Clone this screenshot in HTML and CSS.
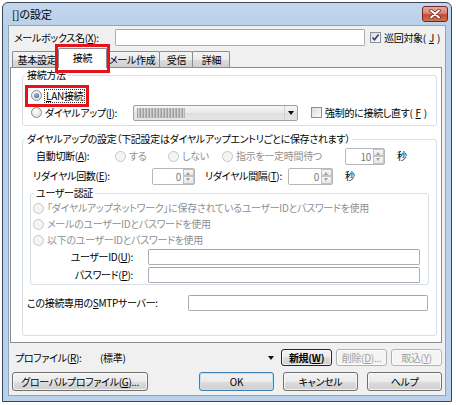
FILE: index.html
```html
<!DOCTYPE html>
<html lang="ja">

<head>
    <meta charset="UTF-8" />
    <title>[]の設定</title>
    <link rel="stylesheet" href="styles.css">
</head>

<body>

    <div class="window">
        <!-- タイトルバー -->
        <div class="titlebar">
            <span class="title">[]の設定</span>
            <span class="close">
                <svg width="12" height="10" viewBox="0 0 12 10">
                    <path d="M2 1.5 L10 8.5 M10 1.5 L2 8.5" stroke="#5a2018" stroke-width="3.4" stroke-linecap="round" />
                    <path d="M2 1.5 L10 8.5 M10 1.5 L2 8.5" stroke="#fff" stroke-width="2" stroke-linecap="round" />
                </svg>
            </span>
        </div>

        <div class="client">
            <!-- メールボックス名 -->
            <div class="row mailbox">
                <span class="lbl">メールボックス名(<u>X</u>):</span>
                <span class="edit"></span>
                <span class="check">
                    <span class="box">
                        <svg width="9" height="9" viewBox="0 0 9 9">
                            <path d="M1.5 4.5 L3.5 6.8 L7.6 1.6" fill="none" stroke="#2b3f84" stroke-width="1.6" />
                        </svg>
                    </span>
                    巡回対象(<u>J</u>)
                </span>
            </div>

            <!-- タブ -->
            <div class="tabs">
                <div class="tab t1">基本設定</div>
                <div class="tab active">接続<span class="mark"></span></div>
                <div class="tab t3">メール作成</div>
                <div class="tab t4">受信</div>
                <div class="tab t5">詳細</div>
            </div>

            <div class="panel">
                <fieldset class="group g-method">
                    <legend>接続方法</legend>
                    <div class="gbody">
                        <div class="row opt lan">
                            <span class="radio on"></span>
                            <span class="focus"><u>L</u>AN接続</span>
                            <span class="mark"></span>
                        </div>
                        <div class="row opt dial">
                            <span class="radio"></span>
                            <span class="dial-lbl">ダイヤルアップ(<u>I</u>):</span>
                            <span class="combo">
                                <span class="blur"></span>
                                <span class="dd"><span class="caret"></span></span>
                            </span>
                            <span class="check force">
                                <span class="box"></span>
                                強制的に接続し直す(<u>F</u>)
                            </span>
                        </div>
                    </div>
                </fieldset>

                <fieldset class="group g-dial">
                    <legend>ダイヤルアップの設定（下記設定はダイヤルアップエントリごとに保存されます）</legend>
                    <div class="gbody">
                        <div class="row auto">
                            <span class="lbl">自動切断(<u>A</u>):</span>
                            <span class="opt dis w53"><span class="radio off"></span>する</span>
                            <span class="opt dis w54"><span class="radio off"></span>しない</span>
                            <span class="opt dis w123"><span class="radio off"></span>指示を一定時間待つ</span>
                            <span class="spin w40"><span class="val">10</span><span class="arrows"><span class="up"></span><span class="down"></span></span></span>
                            <span class="sec">秒</span>
                        </div>
                        <div class="row redial">
                            <span class="lbl">リダイヤル回数(<u>E</u>):</span>
                            <span class="spin w43"><span class="val">0</span><span class="arrows"><span class="up"></span><span class="down"></span></span></span>
                            <span class="lbl2">リダイヤル間隔(<u>T</u>):</span>
                            <span class="spin w45"><span class="val">0</span><span class="arrows"><span class="up"></span><span class="down"></span></span></span>
                            <span class="sec">秒</span>
                        </div>

                        <fieldset class="group g-auth">
                            <legend>ユーザー認証</legend>
                            <div class="gbody">
                                <div class="row opt dis"><span class="radio off"></span>「ダイヤルアップネットワーク」に保存されているユーザーIDとパスワードを使用</div>
                                <div class="row opt dis"><span class="radio off"></span>メールのユーザーIDとパスワードを使用</div>
                                <div class="row opt dis"><span class="radio off"></span>以下のユーザーIDとパスワードを使用</div>
                                <div class="row field">
                                    <span class="lbl">ユーザーID(<u>U</u>):</span>
                                    <span class="edit"></span>
                                </div>
                                <div class="row field pw">
                                    <span class="lbl">パスワード(<u>P</u>):</span>
                                    <span class="edit"></span>
                                </div>
                            </div>
                        </fieldset>

                        <div class="row smtp">
                            <span class="lbl">この接続専用の<u>S</u>MTPサーバー:</span>
                            <span class="edit"></span>
                        </div>
                    </div>
                </fieldset>
            </div>

            <!-- プロファイル -->
            <div class="row profile">
                <span class="lbl">プロファイル(<u>R</u>):</span>
                <span class="pcombo">(標準)<span class="caret"></span></span>
                <span class="btn strong">新規(<u>W</u>)</span>
                <span class="btn disabled">削除(<u>D</u>)...</span>
                <span class="btn disabled">取込(<u>Y</u>)</span>
            </div>

            <!-- ボタン -->
            <div class="row actions">
                <span class="btn global">グローバルプロファイル(<u>G</u>)...</span>
                <span class="btn default">OK</span>
                <span class="btn">キャンセル</span>
                <span class="btn">ヘルプ</span>
            </div>
        </div>
    </div>

</body>

</html>
```

FILE: styles.css
```css
html,
body {
    margin: 0;
    padding: 0;
    background: #fff;
}

body {
    font: 10px/12px "Noto Sans CJK JP", "Noto Sans", sans-serif;
    font-feature-settings: "palt";
    letter-spacing: -0.3px;
    color: #000;
}

u {
    text-decoration-thickness: 1px;
    text-underline-offset: 1px;
}

/* ウィンドウ枠 */
.window {
    box-sizing: border-box;
    width: 450px;
    height: 400px;
    margin: 2px 0 0 2px;
    border: 1px solid #3b4757;
    border-radius: 6px 6px 0 0;
    background: linear-gradient(#c3d6ed, #bad1ea 24px, #b9d1ea);
    display: flex;
    flex-direction: column;
}

.titlebar {
    height: 22px;
    flex-shrink: 0;
    display: flex;
    align-items: center;
    justify-content: space-between;
    padding: 0 3px 0 9px;
}

.title {
    font-size: 11px;
    letter-spacing: 0;
}

.close {
    box-sizing: border-box;
    width: 26px;
    height: 16px;
    margin-top: -1px;
    border: 1px solid #6d2b22;
    border-radius: 3px;
    background: linear-gradient(#e8aa9e, #d88474 45%, #c44a34 55%, #d4714f);
    display: flex;
    align-items: center;
    justify-content: center;
}

.client {
    flex: 1;
    margin: 0 5px 5px;
    border: 1px solid #8ea4bd;
    background: #f0f0f0;
    display: flex;
    flex-direction: column;
}

.row {
    display: flex;
    align-items: center;
    white-space: nowrap;
}

/* 入力欄 */
.edit {
    box-sizing: border-box;
    height: 16px;
    border: 1px solid #abadb3;
    border-top-color: #a3a5ab;
    border-radius: 2px;
    background: #fff;
}

.check {
    display: flex;
    align-items: center;
    gap: 3px;
}

.box {
    box-sizing: border-box;
    width: 11px;
    height: 11px;
    border: 1px solid #8e8f8f;
    background: linear-gradient(135deg, #dcdcdc, #fbfbfb);
    display: flex;
    align-items: center;
    justify-content: center;
}

.mailbox {
    height: 17px;
    margin-top: 3px;
    padding-left: 5px;
}

.mailbox .lbl {
    width: 101px;
}

.mailbox .edit {
    width: 250px;
    height: 17px;
}

.mailbox .check {
    margin-left: 5px;
}

/* タブ */
.tabs {
    display: flex;
    align-items: flex-end;
    height: 19px;
    margin-top: 2px;
    padding-left: 3px;
    position: relative;
    z-index: 1;
    white-space: nowrap;
}

.tab {
    box-sizing: border-box;
    height: 16px;
    padding: 0 4px;
    line-height: 15px;
    border: 1px solid #898c95;
    border-bottom: 0;
    border-radius: 2px 2px 0 0;
    background: linear-gradient(#f3f3f3, #ebebeb 50%, #dddddd 50%, #cfcfcf);
    margin-right: -1px;
    text-align: center;
}

.tab.t1 {
    min-width: 50px;
}

.tab.active {
    position: relative;
    width: 49px;
    height: 20px;
    margin: 0 -3px -1px -3px;
    line-height: 17px;
    background: #fff;
    z-index: 2;
}

.tab.t3 {
    min-width: 53px;
}

.tab.t4 {
    min-width: 34px;
}

.tab.t5 {
    min-width: 38px;
}

.mark {
    position: absolute;
    border: 3px solid #e3141c;
}

.tab .mark {
    left: -4px;
    top: -5px;
    right: -4px;
    bottom: -5px;
}

.panel {
    box-sizing: border-box;
    height: 276px;
    margin: 0 3px 0 1px;
    padding: 0 4px 0 11px;
    border: 1px solid #898c95;
    background: #fff;
}

/* グループボックス */
.group {
    margin: 0;
    padding: 0;
    min-width: 0;
    border: 1px solid #d5dfe5;
    border-radius: 3px;
}

.group legend {
    padding: 0 2px;
    margin-left: 2px;
    line-height: 12px;
}

.g-method {
    margin-top: 1px;
}

.g-method .gbody {
    padding: 6px 0 4px 8px;
}

.opt {
    display: flex;
    align-items: center;
    gap: 3px;
}

.g-method .opt {
    height: 17px;
}

.lan {
    position: relative;
    width: fit-content;
}

.lan .focus {
    outline: 1px dotted #333;
    outline-offset: 0;
    padding: 0 1px;
}

.lan .mark {
    left: -6px;
    top: -2px;
    right: -5px;
    bottom: -3px;
}

.dial-lbl {
    width: 85px;
}

.combo {
    box-sizing: border-box;
    width: 165px;
    height: 16px;
    border: 1px solid #a0a0a0;
    border-radius: 2px;
    background: linear-gradient(#f6f6f6, #e9e9e9 50%, #dedede 50%, #e6e6e6);
    display: flex;
    align-items: center;
    justify-content: space-between;
}

.blur {
    width: 48px;
    height: 10px;
    margin-left: 3px;
    background: repeating-linear-gradient(90deg, #8a8a8a 0 1px, #cdcdcd 1px 2px, #a6a6a6 2px 3px);
    filter: blur(0.5px);
    opacity: 0.75;
}

.dd {
    width: 12px;
    height: 14px;
    display: flex;
    align-items: center;
    justify-content: center;
    border-left: 1px solid #d0d0d0;
}

.caret {
    width: 0;
    height: 0;
    border-left: 3.5px solid transparent;
    border-right: 3.5px solid transparent;
    border-top: 4px solid #111;
}

.force {
    margin-left: 10px;
}

/* ラジオボタン */
.radio {
    position: relative;
    flex-shrink: 0;
    box-sizing: border-box;
    width: 11px;
    height: 11px;
    border-radius: 50%;
    border: 1px solid #8b8c8c;
    background: radial-gradient(circle at 40% 35%, #fff, #d6d6d6);
}

.radio.on::after {
    content: "";
    position: absolute;
    inset: 2px;
    border-radius: 50%;
    background: radial-gradient(circle at 40% 35%, #9cc4ee, #1a4c8f);
}

.radio.off {
    border-color: #c6c6c6;
    background: #f4f4f4;
}

.dis {
    color: #8f8f8f;
}

.g-dial {
    margin-top: 7px;
}

.g-dial > .gbody {
    padding: 1px 0 24px 0;
}

.auto,
.redial {
    height: 20px;
}

.auto {
    padding-left: 13px;
}

.auto .lbl {
    width: 79px;
}

.w53 {
    width: 53px;
}

.w54 {
    width: 54px;
}

.w123 {
    width: 123px;
}

.w40 {
    width: 40px;
}

.w43 {
    width: 43px;
}

.w45 {
    width: 45px;
}

/* スピンボックス */
.spin {
    box-sizing: border-box;
    height: 17px;
    display: flex;
    border: 1px solid #b5b7bc;
    border-radius: 2px;
    background: #fff;
}

.spin .val {
    flex: 1;
    text-align: right;
    line-height: 15px;
    padding-right: 2px;
    color: #7a7a7a;
}

.arrows {
    width: 11px;
    display: flex;
    flex-direction: column;
}

.arrows span {
    flex: 1;
    border: 1px solid #c3c3c3;
    background: linear-gradient(#f7f7f7, #e6e6e6);
    position: relative;
}

.arrows span::after {
    content: "";
    position: absolute;
    left: 2px;
    top: 2px;
    border-left: 2.5px solid transparent;
    border-right: 2.5px solid transparent;
}

.arrows .up::after {
    border-bottom: 3px solid #a0a0a0;
}

.arrows .down::after {
    top: 1px;
    border-top: 3px solid #a0a0a0;
}

.sec {
    margin-left: 12px;
}

.redial {
    padding-left: 10px;
}

.redial .lbl {
    width: 119px;
}

.redial .lbl2 {
    width: 83px;
    margin-left: 10px;
}

.g-auth {
    margin: 1px 7px 0;
}

.g-auth legend {
    margin-left: 3px;
}

.g-auth .gbody {
    padding: 1px 8px 1px 2px;
}

.g-auth .opt {
    height: 16px;
}

.field .lbl {
    width: 100px;
    margin-right: 15px;
    text-align: right;
}

.field .edit {
    flex: 1;
}

.field {
    margin-top: 1px;
}

.field.pw {
    margin-top: 2px;
}

.smtp {
    margin: 10px 8px 0 0;
    padding-left: 4px;
}

.smtp .lbl {
    width: 161px;
}

.smtp .edit {
    flex: 1;
}

/* 下部 */
.profile {
    height: 17px;
    margin-top: 6px;
    padding-left: 6px;
}

.profile .lbl {
    width: 81px;
}

.pcombo {
    width: 184px;
    box-sizing: border-box;
    padding: 0 6px 0 4px;
    display: flex;
    align-items: center;
    justify-content: space-between;
}

.btn {
    box-sizing: border-box;
    height: 100%;
    border: 1px solid #707070;
    border-radius: 3px;
    background: linear-gradient(#f2f2f2, #ebebeb 50%, #dddddd 50%, #cfcfcf);
    box-shadow: inset 0 0 0 1px rgba(255, 255, 255, 0.7);
    display: flex;
    align-items: center;
    justify-content: center;
}

.profile .btn {
    width: 51px;
    margin-left: 4px;
}

.profile .btn.strong {
    margin-left: 1px;
    border-color: #262626;
    font-weight: bold;
}

.btn.disabled {
    color: #a0a0a0;
    border-color: #adb2b5;
    background: #f4f4f4;
}

.actions {
    height: 19px;
    margin-top: 6px;
    padding: 0 3px;
    gap: 9px;
}

.actions .btn {
    width: 75px;
}

.actions .btn.global {
    width: 136px;
    margin-right: auto;
}

.btn.default {
    border-color: #3c7fb1;
    box-shadow: inset 0 0 0 1px #b6e4fb;
}
```
